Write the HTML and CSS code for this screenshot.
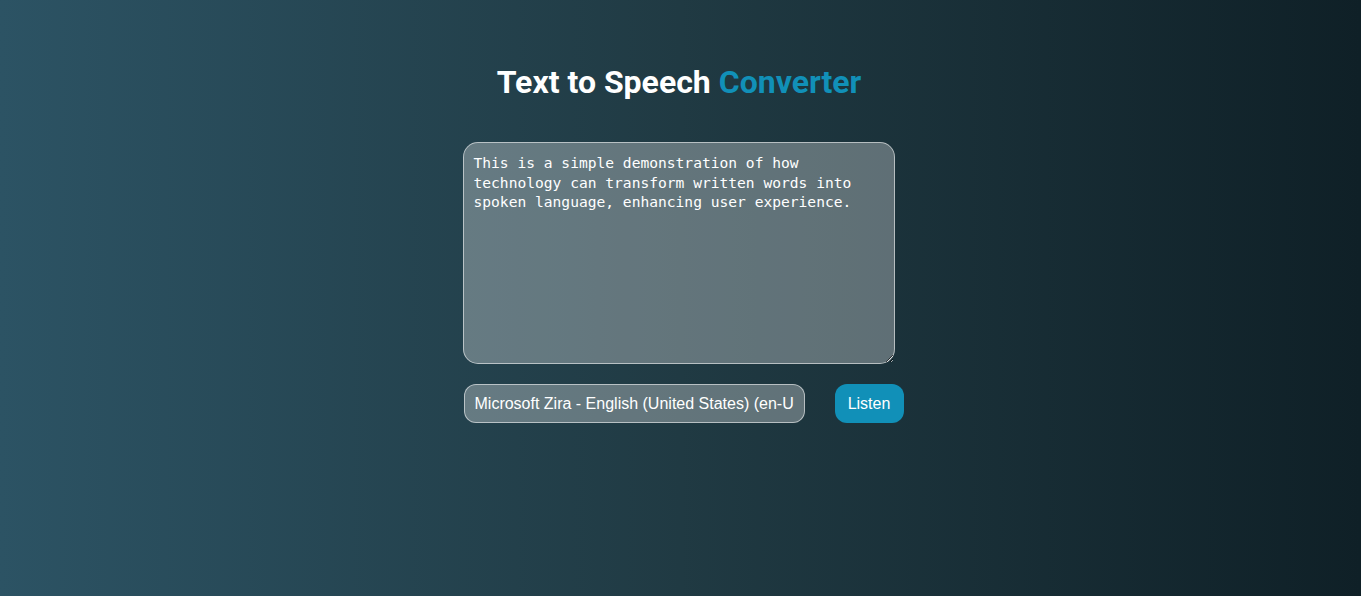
FILE: index.html
```html
<!DOCTYPE html>
<html lang="en">
<head>
<meta charset="UTF-8">
<title>Text to Speech Converter</title>
<link rel="stylesheet" href="styles.css">
</head>
<body>
<main class="hero">
  <h1 class="title">Text to Speech <span class="accent">Converter</span></h1>
  <div class="panel">
    <textarea class="input">This is a simple demonstration of how technology can transform written words into spoken language, enhancing user experience.</textarea>
    <div class="row">
      <select class="voice">
        <option>Microsoft Zira - English (United States) (en-US)</option>
      </select>
      <button class="listen">Listen</button>
    </div>
  </div>
</main>
</body>
</html>
```
FILE: styles.css
```css
* { box-sizing: border-box; }
html, body { margin: 0; padding: 0; }
body {
  min-height: 100vh;
  background: linear-gradient(to right, #2c5364 0%, #203a43 50%, #0f2027 100%);
  font-family: "Liberation Sans", Arial, sans-serif;
}
.hero {
  min-height: 100vh;
  display: flex;
  flex-direction: column;
  align-items: center;
  padding-top: 61px;
}
.title {
  margin: 0;
  font-family: Roboto, "Liberation Sans", sans-serif;
  font-weight: 700;
  font-size: 32px;
  line-height: 42px;
  color: #ffffff;
  margin-left: -3px;
}
.accent { color: #1190b8; }
.panel {
  width: 432px;
  margin-top: 39px;
  margin-left: -4px;
  display: flex;
  flex-direction: column;
  align-items: flex-start;
}
.input {
  width: 432px;
  height: 222px;
  padding: 10px 10px;
  border: 1px solid rgba(255, 255, 255, 0.55);
  border-radius: 15px;
  background: rgba(255, 255, 255, 0.3);
  color: #ffffff;
  font-family: "DejaVu Sans Mono", "Liberation Mono", monospace;
  font-size: 14.6px;
  line-height: 19.5px;
  resize: vertical;
  outline: none;
}
.row {
  width: 440px;
  margin-top: 20px;
  margin-left: 1px;
  display: flex;
  gap: 30px;
  flex-shrink: 0;
}
.voice {
  width: 341px;
  height: 39px;
  flex-shrink: 0;
  padding: 0 10px;
  border: 1px solid rgba(255, 255, 255, 0.55);
  border-radius: 12px;
  background: rgba(255, 255, 255, 0.3);
  color: #ffffff;
  font-family: "Liberation Sans", Arial, sans-serif;
  font-size: 16px;
  appearance: none;
  -webkit-appearance: none;
  outline: none;
}
.voice option { color: #000; }
.listen {
  height: 39px;
  width: 69px;
  flex-shrink: 0;
  padding: 0;
  border: none;
  border-radius: 12px;
  background: #1190b8;
  color: #ffffff;
  font-family: "Liberation Sans", Arial, sans-serif;
  font-size: 16px;
  cursor: pointer;
}
```
